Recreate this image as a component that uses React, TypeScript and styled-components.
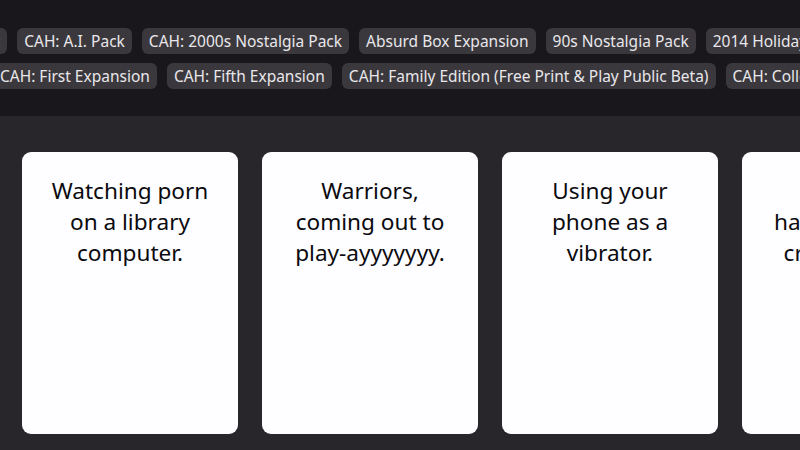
import React from "react";
import styled, { createGlobalStyle } from "styled-components";

const GlobalStyle = createGlobalStyle`
  html, body { margin: 0; padding: 0; background: #28262a; }
  body { width: 800px; height: 450px; overflow: hidden; font-family: "Noto Sans", "Open Sans", sans-serif; }
`;

const Page = styled.div`
  width: 800px;
  height: 450px;
  display: flex;
  flex-direction: column;
  overflow: hidden;
  background: #28262a;
`;

const PackBar = styled.header`
  height: 116px;
  flex: none;
  background: #19171b;
  padding-top: 28px;
  box-sizing: border-box;
  display: flex;
  flex-direction: column;
  gap: 9px;
  overflow: hidden;
`;

const ChipRow = styled.div<{ $offset: number }>`
  display: flex;
  gap: 10px;
  margin-left: ${(p) => p.$offset}px;
  white-space: nowrap;
`;

const Chip = styled.span`
  flex: none;
  height: 26px;
  line-height: 26px;
  padding: 0 7px;
  border-radius: 6px;
  background: #3a383c;
  color: #e9e7eb;
  font-size: 15.5px;
`;

const Table = styled.main`
  flex: 1;
  padding: 36px 0 0 22px;
  display: flex;
  gap: 24px;
  overflow: hidden;
`;

const Card = styled.div`
  flex: none;
  width: 216px;
  height: 282px;
  box-sizing: border-box;
  background: #fefdff;
  border-radius: 9px;
  padding: 23px 24px;
  color: #0b0a0e;
  font-size: 22.6px;
  line-height: 31px;
  text-align: center;
`;

const row1 = [
  "CAH: Base Set",
  "CAH: A.I. Pack",
  "CAH: 2000s Nostalgia Pack",
  "Absurd Box Expansion",
  "90s Nostalgia Pack",
  "2014 Holiday Pack",
];

const row2 = [
  "CAH: First Expansion",
  "CAH: Fifth Expansion",
  "CAH: Family Edition (Free Print & Play Public Beta)",
  "CAH: College Pack",
];

const cards = [
  "Watching porn on a library computer.",
  "Warriors, coming out to play-ayyyyyyy.",
  "Using your phone as a vibrator.",
  "Getting a hard\u2011on at the crime scene.",
];

export default function App() {
  return (
    <>
      <GlobalStyle />
      <Page>
        <PackBar>
          <ChipRow $offset={-108}>
            {row1.map((t) => (
              <Chip key={t}>{t}</Chip>
            ))}
          </ChipRow>
          <ChipRow $offset={-7}>
            {row2.map((t) => (
              <Chip key={t}>{t}</Chip>
            ))}
          </ChipRow>
        </PackBar>
        <Table>
          {cards.map((t) => (
            <Card key={t}>{t}</Card>
          ))}
        </Table>
      </Page>
    </>
  );
}
